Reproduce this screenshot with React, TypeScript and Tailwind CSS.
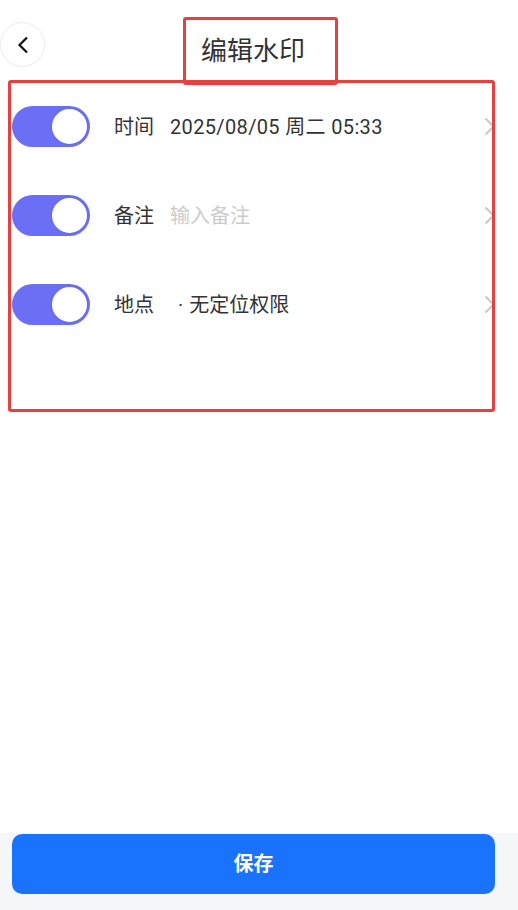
import React from "react";

const font = { fontFamily: 'Roboto, "Noto Sans CJK SC", "Noto Sans", sans-serif' };

function Toggle() {
  return (
    <div className="w-[78px] h-[41px] rounded-full bg-[#6b6ff6] flex items-center justify-end pr-[1px] shrink-0">
      <div className="w-[39px] h-[39px] rounded-full bg-white border-2 border-[#6a6ee9]" />
    </div>
  );
}

function Chevron() {
  return (
    <svg width="11" height="19" viewBox="0 0 11 19" className="ml-auto mr-[-3px] shrink-0">
      <path d="M1.5 1.5 L9.5 9.5 L1.5 17.5" fill="none" stroke="#c9c9c9" strokeWidth="2" />
    </svg>
  );
}

function Row({ label, children }: { label: string; children: React.ReactNode }) {
  return (
    <div className="h-[89px] flex items-center pl-[1px]">
      <Toggle />
      <span className="ml-[24px] text-[20px] text-[#333] w-[40px] shrink-0">{label}</span>
      <div className="ml-[16px] text-[20px] whitespace-nowrap">{children}</div>
      <Chevron />
    </div>
  );
}

export default function App() {
  return (
    <div className="w-[518px] h-[910px] bg-white flex flex-col" style={font}>
      {/* header */}
      <div className="pt-[17px] flex items-start">
        <button className="mt-[5px] w-[45px] h-[45px] rounded-full border border-[#ececec] flex items-center justify-center">
          <svg width="12" height="18" viewBox="0 0 12 18">
            <path d="M10 1.5 L2.5 9 L10 16.5" fill="none" stroke="#111" strokeWidth="2.2" />
          </svg>
        </button>
        <div className="ml-[138px] w-[155px] h-[68px] border-[3px] border-[#e5413f] rounded-[3px] flex items-center pl-[15px]">
          <span className="text-[26px] text-[#333] leading-none">编辑水印</span>
        </div>
      </div>

      {/* settings */}
      <div className="mt-[-5px] ml-[8px] w-[487px] h-[332px] border-[3px] border-[#e5413f] rounded-[3px] overflow-hidden">
        <div className="mt-[-1px]">
          <Row label="时间">
            <span className="text-[#333] tracking-[0.35px]">2025/08/05 周二 05:33</span>
          </Row>
          <Row label="备注">
            <span className="text-[#cccccc]">输入备注</span>
          </Row>
          <Row label="地点">
            <span className="text-[#333] ml-[8px]">·<span className="ml-[6px]">无定位权限</span></span>
          </Row>
        </div>
      </div>

      <div className="flex-1" />

      {/* footer */}
      <div className="h-[77px] bg-[#f5f6f8] pt-[1px] px-[12px]">
        <button className="w-[483px] h-[60px] rounded-[10px] bg-[#1a73fd] text-white text-[20px] font-bold">
          保存
        </button>
      </div>
    </div>
  );
}
